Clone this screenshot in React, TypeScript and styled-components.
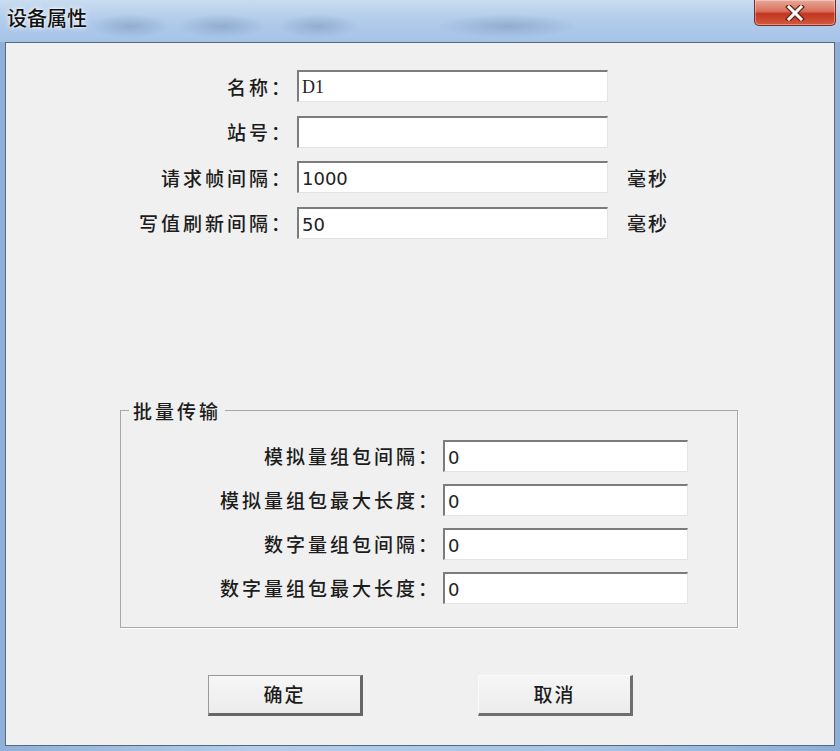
import { FC, Fragment } from "react";
import styled, { createGlobalStyle } from "styled-components";

const GlobalStyle = createGlobalStyle`
  html, body {
    margin: 0;
    padding: 0;
    background: #f0f0f0;
  }
  body {
    font-family: "Noto Sans CJK SC", "Liberation Sans", sans-serif;
  }
`;

const cjk = `"Noto Sans CJK SC", "Liberation Sans", sans-serif`;

const StyledWindow = styled.div`
  display: flex;
  flex-direction: column;
  width: 840px;
  height: 751px;
  background: linear-gradient(to right, #8fb0d8 0%, #b4cdea 30%, #a7c4e6 70%, #8eaed6 100%);
  overflow: hidden;
`;

const StyledTitleBar = styled.div`
  display: flex;
  align-items: flex-start;
  justify-content: space-between;
  height: 42px;
  flex-shrink: 0;
  background:
    radial-gradient(ellipse 40px 12px at 130px 26px, rgba(90, 120, 160, 0.35), transparent),
    radial-gradient(ellipse 45px 12px at 222px 26px, rgba(90, 120, 160, 0.35), transparent),
    radial-gradient(ellipse 40px 12px at 318px 26px, rgba(90, 120, 160, 0.35), transparent),
    radial-gradient(ellipse 70px 12px at 508px 26px, rgba(90, 120, 160, 0.35), transparent),
    linear-gradient(to bottom, #c9dcf0 0%, #b3cceb 45%, #a5c2e6 100%);
`;

const StyledTitle = styled.span`
  margin: 6px 0 0 7px;
  font-family: ${cjk};
  font-size: 20px;
  font-weight: 500;
  line-height: 24px;
  color: #111;
  text-shadow: 0 0 6px rgba(255, 255, 255, 0.9), 0 0 3px rgba(255, 255, 255, 0.9);
`;

const StyledCloseButton = styled.div`
  display: flex;
  align-items: center;
  justify-content: center;
  width: 80px;
  height: 25px;
  margin-right: 4px;
  border: 1px solid #7a2a20;
  border-top: none;
  border-radius: 0 0 5px 5px;
  background: linear-gradient(to bottom, #e9a898 0%, #d9705c 45%, #c2351f 55%, #d35a3f 100%);
  box-shadow: inset 0 0 0 1px rgba(255, 255, 255, 0.35);
`;

const StyledClient = styled.div`
  display: flex;
  flex-direction: column;
  flex: 1;
  margin: 0 5px 5px 5px;
  border: 1px solid #56697f;
  background: #f0f0f0;
`;

const StyledFieldGrid = styled.div`
  display: grid;
  grid-template-columns: 284px 311px auto;
  column-gap: 7px;
  row-gap: 13.5px;
  padding-top: 27px;
  align-items: center;
`;

const StyledLabel = styled.span`
  justify-self: end;
  font-family: ${cjk};
  font-size: 19px;
  font-weight: 500;
  letter-spacing: 3px;
  margin-right: -3px;
  color: #1c1c1c;
  white-space: nowrap;
`;

const StyledInput = styled.div<{ $serif?: boolean }>`
  display: flex;
  align-items: center;
  height: 32px;
  box-sizing: border-box;
  padding: 2px 0 0 3px;
  background: #fff;
  border-top: 2px solid #7c7c7c;
  border-left: 2px solid #7c7c7c;
  border-right: 1px solid #e4e4e4;
  border-bottom: 1px solid #e4e4e4;
  font-family: ${(p) => (p.$serif ? `"Liberation Serif", serif` : `"DejaVu Sans", sans-serif`)};
  font-size: 18px;
  color: #222;
`;

const StyledUnit = styled.span`
  margin-left: 12px;
  font-family: ${cjk};
  font-size: 19px;
  font-weight: 500;
  letter-spacing: 2px;
  color: #1c1c1c;
`;

const StyledGroup = styled.fieldset`
  margin: 162px 0 0 114px;
  width: 618px;
  box-sizing: border-box;
  padding: 19px 0 23px 0;
  border: 1px solid #a8a8a8;
  box-shadow: 1px 1px 0 #fff;
`;

const StyledLegend = styled.legend`
  margin-left: 8px;
  padding: 0 4px;
  font-family: ${cjk};
  font-size: 19px;
  font-weight: 500;
  line-height: 20px;
  letter-spacing: 3px;
  color: #1c1c1c;
`;

const StyledGroupGrid = styled.div`
  display: grid;
  grid-template-columns: 316px 245px;
  column-gap: 6px;
  row-gap: 12px;
  align-items: center;
`;

const StyledButtonRow = styled.div`
  display: flex;
  gap: 115px;
  margin: 47px 0 0 202px;
`;

const StyledButton = styled.button<{ $default?: boolean }>`
  width: 155px;
  height: 41px;
  box-sizing: border-box;
  background: linear-gradient(to bottom, #f6f6f6, #ececec);
  border-style: solid;
  border-width: 1px 3px 3px 1px;
  border-color: ${(p) => (p.$default ? "#9a9a9a #666 #666 #9a9a9a" : "#fafafa #6e6e6e #6e6e6e #fafafa")};
  font-family: ${cjk};
  font-size: 19px;
  font-weight: 500;
  letter-spacing: 2px;
  color: #1c1c1c;
  padding: 0 0 2px 0;
`;

const fields = [
  { label: "名称：", value: "D1", serif: true },
  { label: "站号：", value: "" },
  { label: "请求帧间隔：", value: "1000", unit: "毫秒" },
  { label: "写值刷新间隔：", value: "50", unit: "毫秒" },
];

const batchFields = [
  { label: "模拟量组包间隔：", value: "0" },
  { label: "模拟量组包最大长度：", value: "0" },
  { label: "数字量组包间隔：", value: "0" },
  { label: "数字量组包最大长度：", value: "0" },
];

const CloseX: FC = () => (
  <svg width="20" height="16" viewBox="0 0 20 16">
    <path d="M4 2 L16 14 M16 2 L4 14" stroke="#6a2418" strokeWidth="5.5" strokeLinecap="square" />
    <path d="M4 2 L16 14 M16 2 L4 14" stroke="#fff" strokeWidth="3" strokeLinecap="square" />
  </svg>
);

export default function App() {
  return (
    <>
      <GlobalStyle />
      <StyledWindow>
        <StyledTitleBar>
          <StyledTitle>设备属性</StyledTitle>
          <StyledCloseButton>
            <CloseX />
          </StyledCloseButton>
        </StyledTitleBar>
        <StyledClient>
          <StyledFieldGrid>
            {fields.map((f) => (
              <Fragment key={f.label}>
                <StyledLabel>{f.label}</StyledLabel>
                <StyledInput $serif={f.serif}>{f.value}</StyledInput>
                {f.unit ? <StyledUnit>{f.unit}</StyledUnit> : <span />}
              </Fragment>
            ))}
          </StyledFieldGrid>
          <StyledGroup>
            <StyledLegend>批量传输</StyledLegend>
            <StyledGroupGrid>
              {batchFields.map((f) => (
                <Fragment key={f.label}>
                  <StyledLabel>{f.label}</StyledLabel>
                  <StyledInput>{f.value}</StyledInput>
                </Fragment>
              ))}
            </StyledGroupGrid>
          </StyledGroup>
          <StyledButtonRow>
            <StyledButton $default>确定</StyledButton>
            <StyledButton>取消</StyledButton>
          </StyledButtonRow>
        </StyledClient>
      </StyledWindow>
    </>
  );
}
